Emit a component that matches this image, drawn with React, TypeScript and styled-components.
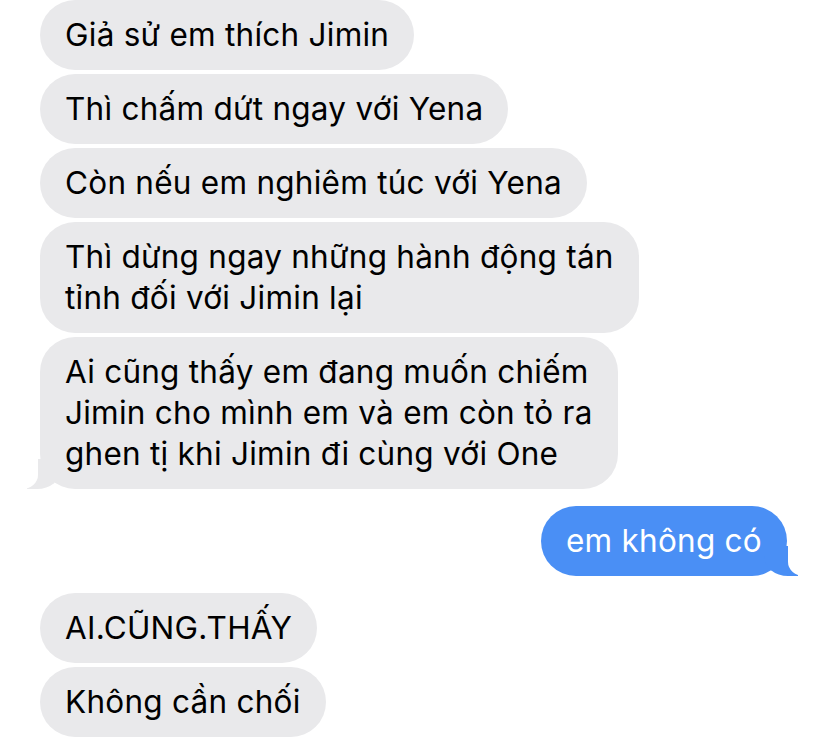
import styled, { createGlobalStyle, css } from 'styled-components'

const GlobalStyle = createGlobalStyle`
  html, body {
    margin: 0;
    padding: 0;
    background: #ffffff;
  }
  body {
    width: 828px;
    height: 739px;
    overflow: hidden;
    font-family: Inter, "Noto Sans", "Liberation Sans", sans-serif;
    -webkit-font-smoothing: antialiased;
  }
`

const GREY = '#e9e9eb'
const BLUE = '#4a8ff5'

const Thread = styled.div`
  display: flex;
  flex-direction: column;
  gap: 17px;
  padding: 0 41px 0 40px;
`

const Group = styled.div<{ $mine?: boolean }>`
  display: flex;
  flex-direction: column;
  align-items: ${(p) => (p.$mine ? 'flex-end' : 'flex-start')};
  gap: 4px;
`

const tailThem = css`
  &::before {
    content: '';
    position: absolute;
    bottom: 0;
    left: -13px;
    width: 34px;
    height: 30px;
    background: ${GREY};
    border-bottom-right-radius: 24px 20px;
  }
  &::after {
    content: '';
    position: absolute;
    bottom: 0;
    left: -40px;
    width: 38px;
    height: 32px;
    background: #ffffff;
    border-bottom-right-radius: 16px 14px;
  }
`

const tailMine = css`
  &::before {
    content: '';
    position: absolute;
    bottom: 0;
    right: -11px;
    width: 34px;
    height: 30px;
    background: ${BLUE};
    border-bottom-left-radius: 24px 20px;
  }
  &::after {
    content: '';
    position: absolute;
    bottom: 0;
    right: -40px;
    width: 39px;
    height: 32px;
    background: #ffffff;
    border-bottom-left-radius: 16px 14px;
  }
`

const Bubble = styled.div<{ $mine?: boolean; $tail?: boolean }>`
  position: relative;
  box-sizing: border-box;
  padding: 14px 25px 15px;
  border-radius: 35px;
  font-size: 31.5px;
  line-height: 41px;
  letter-spacing: 0.25px;
  color: ${(p) => (p.$mine ? '#ffffff' : '#000000')};
  background: ${(p) => (p.$mine ? BLUE : GREY)};
  white-space: nowrap;
  ${(p) => p.$tail && (p.$mine ? tailMine : tailThem)}
`

const Text = styled.span`
  position: relative;
  z-index: 1;
`

type Message = { lines: string[]; tail?: boolean }

const theirs: Message[] = [
  { lines: ['Giả sử em thích Jimin'] },
  { lines: ['Thì chấm dứt ngay với Yena'] },
  { lines: ['Còn nếu em nghiêm túc với Yena'] },
  { lines: ['Thì dừng ngay những hành động tán', 'tỉnh đối với Jimin lại'] },
  {
    lines: [
      'Ai cũng thấy em đang muốn chiếm',
      'Jimin cho mình em và em còn tỏ ra',
      'ghen tị khi Jimin đi cùng với One',
    ],
    tail: true,
  },
]

const later: Message[] = [
  { lines: ['AI.CŨNG.THẤY'] },
  { lines: ['Không cần chối'] },
]

const renderLines = (lines: string[]) =>
  lines.map((l, i) => (
    <span key={i}>
      {i > 0 && <br />}
      {l}
    </span>
  ))

const App = () => {
  return (
    <>
      <GlobalStyle />
      <Thread>
        <Group>
          {theirs.map((m, i) => (
            <Bubble key={i} $tail={m.tail}>
              <Text>{renderLines(m.lines)}</Text>
            </Bubble>
          ))}
        </Group>
        <Group $mine>
          <Bubble $mine $tail>
            <Text>em không có</Text>
          </Bubble>
        </Group>
        <Group>
          {later.map((m, i) => (
            <Bubble key={i} $tail={m.tail}>
              <Text>{renderLines(m.lines)}</Text>
            </Bubble>
          ))}
        </Group>
      </Thread>
    </>
  )
}

export default App
